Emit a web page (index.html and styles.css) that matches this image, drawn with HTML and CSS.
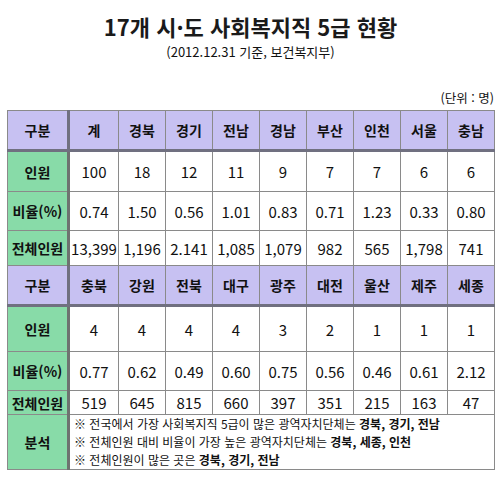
FILE: index.html
```html
<!DOCTYPE html>
<html lang="ko">
<head>
    <meta charset="UTF-8">
    <title>17개 시·도 사회복지직 5급 현황</title>
    <link rel="stylesheet" href="styles.css">
</head>
<body>
    <h1 class="title">17개 시·도 사회복지직 5급 현황</h1>
    <p class="source">(2012.12.31 기준, 보건복지부)</p>
    <p class="unit">(단위 : 명)</p>

    <table class="stats">
        <colgroup>
            <col class="c-label">
            <col class="c-total">
            <col span="8" class="c-region">
        </colgroup>
        <tr class="head">
            <th class="label">구분</th>
            <th>계</th><th>경북</th><th>경기</th><th>전남</th><th>경남</th><th>부산</th><th>인천</th><th>서울</th><th>충남</th>
        </tr>
        <tr class="r-count">
            <th class="label">인원</th>
            <td>100</td><td>18</td><td>12</td><td>11</td><td>9</td><td>7</td><td>7</td><td>6</td><td>6</td>
        </tr>
        <tr class="r-rate">
            <th class="label">비율(%)</th>
            <td>0.74</td><td>1.50</td><td>0.56</td><td>1.01</td><td>0.83</td><td>0.71</td><td>1.23</td><td>0.33</td><td>0.80</td>
        </tr>
        <tr class="r-all">
            <th class="label">전체인원</th>
            <td>13,399</td><td>1,196</td><td>2.141</td><td>1,085</td><td>1,079</td><td>982</td><td>565</td><td>1,798</td><td>741</td>
        </tr>
        <tr class="head head-2">
            <th class="label">구분</th>
            <th>충북</th><th>강원</th><th>전북</th><th>대구</th><th>광주</th><th>대전</th><th>울산</th><th>제주</th><th>세종</th>
        </tr>
        <tr class="r-count r-count-2">
            <th class="label">인원</th>
            <td>4</td><td>4</td><td>4</td><td>4</td><td>3</td><td>2</td><td>1</td><td>1</td><td>1</td>
        </tr>
        <tr class="r-rate">
            <th class="label">비율(%)</th>
            <td>0.77</td><td>0.62</td><td>0.49</td><td>0.60</td><td>0.75</td><td>0.56</td><td>0.46</td><td>0.61</td><td>2.12</td>
        </tr>
        <tr class="r-all r-all-2">
            <th class="label">전체인원</th>
            <td>519</td><td>645</td><td>815</td><td>660</td><td>397</td><td>351</td><td>215</td><td>163</td><td>47</td>
        </tr>
        <tr class="r-note">
            <th class="label">분석</th>
            <td colspan="9" class="note">
                <div class="note-line">※ 전국에서 가장 사회복지직 5급이 많은 광역자치단체는 <b>경북, 경기, 전남</b></div>
                <div class="note-line">※ 전체인원 대비 비율이 가장 높은 광역자치단체는 <b>경북, 세종, 인천</b></div>
                <div class="note-line">※ 전체인원이 많은 곳은 <b>경북, 경기, 전남</b></div>
            </td>
        </tr>
    </table>
</body>
</html>
```

FILE: styles.css
```css
body {
    margin: 0;
    padding: 0 6px 0 7px;
    background: #fff;
    color: #111;
    font-family: "Noto Sans CJK KR", "Noto Sans", sans-serif;
}
.title {
    margin: 12px 0 0;
    text-align: center;
    font-size: 22px;
    font-weight: bold;
    line-height: 28px;
    color: #1a1a1a;
}
.source {
    margin: 4px 0 0;
    text-align: center;
    font-size: 13px;
    line-height: 16px;
}
.unit {
    margin: 30px 0 0;
    text-align: right;
    font-size: 12.5px;
    line-height: 16px;
}
.stats {
    width: 487px;
    margin-top: 4px;
    border-collapse: collapse;
    table-layout: fixed;
    border: 1px solid #8a8a8a;
}
.c-label { width: 61px; }
.c-total { width: 50px; }
.c-region { width: 47px; }
.stats th,
.stats td {
    border: 1px solid #8a8a8a;
    padding: 0;
    text-align: center;
    font-size: 15px;
    font-weight: normal;
    white-space: nowrap;
}
.stats th.label {
    background: #88dba8;
    font-weight: bold;
    font-size: 14px;
    border-right: 3px solid #6e7270;
}
.head th {
    background: #c7c1f2;
    font-weight: bold;
    font-size: 14px;
    height: 38px;
    border-bottom: 3px solid #707080;
}
.head th.label {
    background: #c7c1f2;
    border-right: 3px solid #707080;
}
.r-count td,
.r-count th { height: 39px; }
.r-count-2 td,
.r-count-2 th { height: 44px; }
.r-rate td,
.r-rate th { height: 38px; }
.r-all td,
.r-all th { height: 34px; }
.r-all-2 td,
.r-all-2 th { height: 23px; }
.r-note th { height: 54px; }
.stats td.note {
    text-align: left;
    font-size: 12px;
    padding: 0 0 0 4px;
}
.note-line {
    height: 18px;
    line-height: 18px;
}
.note b { font-weight: bold; }
```
